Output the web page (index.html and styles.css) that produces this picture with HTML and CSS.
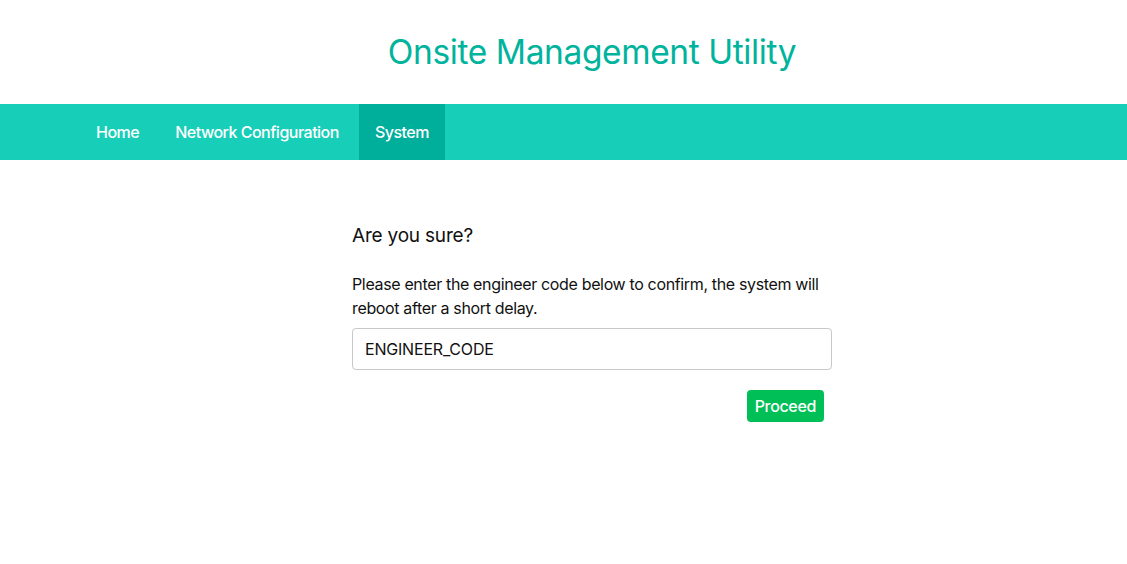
FILE: index.html
```html
<!DOCTYPE html>
<html>
<head>
<meta charset="utf-8">
<title>Onsite Management Utility</title>
<link rel="stylesheet" href="styles.css">
</head>
<body>
<header class="header">
  <div class="container">
    <h1 class="title">Onsite Management Utility</h1>
  </div>
</header>
<nav class="nav">
  <div class="container nav-inner">
    <a class="nav-item" href="#">Home</a>
    <a class="nav-item" href="#">Network Configuration</a>
    <a class="nav-item active" href="#">System</a>
  </div>
</nav>
<main class="container">
  <form class="form">
    <h2 class="question">Are you sure?</h2>
    <p class="desc">Please enter the engineer code below to confirm, the system will reboot after a short delay.</p>
    <input class="code-input" type="text" value="ENGINEER_CODE">
    <div class="actions">
      <button class="btn" type="button">Proceed</button>
    </div>
  </form>
</main>
</body>
</html>
```
FILE: styles.css
```css
* { box-sizing: border-box; }
body {
  margin: 0;
  font-family: Inter, "Noto Sans", sans-serif;
  color: #111;
  background: #fff;
}
.container {
  width: 1024px;
  margin-left: 80px;
}
.header {
  height: 104px;
  display: flex;
  align-items: center;
}
.title {
  margin: 0;
  text-align: center;
  font-weight: 400;
  font-size: 33.5px;
  color: #00b39d;
  letter-spacing: -0.4px;
}
.nav {
  background: #17cfb8;
  height: 56px;
}
.nav-inner {
  display: flex;
  gap: 4px;
  height: 100%;
}
.nav-item {
  display: flex;
  align-items: center;
  padding: 0 16px;
  color: #fff;
  text-decoration: none;
  font-size: 16px;
  font-weight: 500;
  letter-spacing: -0.5px;
}
.nav-item.active {
  background: #00ae9c;
}
.form {
  width: 480px;
  margin: 0 auto;
  padding-top: 64px;
}
.question {
  margin: 0;
  font-size: 19px;
  font-weight: 400;
  line-height: 24px;
  letter-spacing: -0.2px;
}
.desc {
  margin: 24px 0 8px;
  font-size: 16px;
  line-height: 24px;
  letter-spacing: -0.35px;
}
.code-input {
  display: block;
  width: 480px;
  height: 42px;
  border: 1px solid #c8c8cc;
  border-radius: 4px;
  padding: 0 12px;
  font-family: inherit;
  font-size: 16px;
  color: #111;
  letter-spacing: -0.2px;
}
.actions {
  display: flex;
  justify-content: flex-end;
  padding: 20px 8px 0 0;
}
.btn {
  height: 32px;
  padding: 0 8px;
  border: none;
  border-radius: 4px;
  background: #00bf56;
  color: #fff;
  font-family: inherit;
  font-size: 16px;
  font-weight: 500;
  letter-spacing: -0.35px;
}
```
